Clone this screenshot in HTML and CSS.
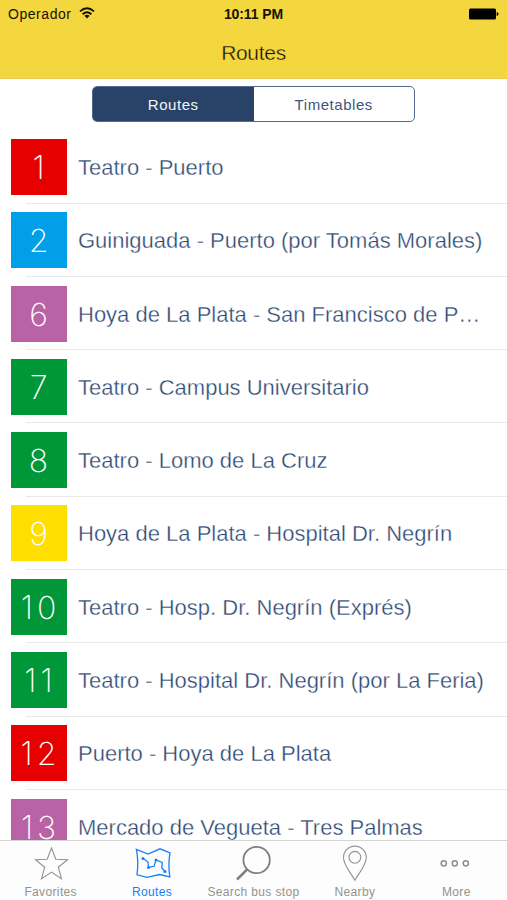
FILE: index.html
```html
<!DOCTYPE html>
<html lang="en">
<head>
<meta charset="utf-8">
<title>Routes</title>
<link rel="stylesheet" href="styles.css">
</head>
<body>
<div class="app">
  <header class="header">
    <div class="status">
      <div class="carrier"><span>Operador</span>
        <svg class="wifi" viewBox="0 0 16 12" width="16" height="12"><g fill="none" stroke="#171303" stroke-width="1.9"><path d="M1 4.4Q8 -1.8 15 4.4"/><path d="M3.6 7.2Q8 3.4 12.4 7.2"/></g><path d="M5.4 8.7Q8 6.7 10.6 8.7L8 11.5Z" fill="#171303"/></svg>
      </div>
      <div class="clock">10:11 PM</div>
      <div class="power"><svg width="30" height="12" viewBox="0 0 30 12"><rect x="0" y="0.5" width="27" height="11" rx="1.5"/><path d="M27.7 4Q29.6 4.3 29.6 6T27.7 8Z"/></svg></div>
    </div>
    <h1 class="title">Routes</h1>
  </header>
  <div class="filter"><div class="segments">
    <div class="segment selected">Routes</div><div class="segment">Timetables</div>
  </div></div>
  <main class="list">
    <div class="row"><div class="tile red">1</div><div class="name">Teatro - Puerto</div></div>
    <div class="row"><div class="tile blue">2</div><div class="name">Guiniguada - Puerto (por Tomás Morales)</div></div>
    <div class="row"><div class="tile purple">6</div><div class="name">Hoya de La Plata - San Francisco de P…</div></div>
    <div class="row"><div class="tile green">7</div><div class="name">Teatro - Campus Universitario</div></div>
    <div class="row"><div class="tile green">8</div><div class="name">Teatro - Lomo de La Cruz</div></div>
    <div class="row"><div class="tile yellow">9</div><div class="name">Hoya de La Plata - Hospital Dr. Negrín</div></div>
    <div class="row"><div class="tile green">10</div><div class="name">Teatro - Hosp. Dr. Negrín (Exprés)</div></div>
    <div class="row"><div class="tile green">11</div><div class="name">Teatro - Hospital Dr. Negrín (por La Feria)</div></div>
    <div class="row"><div class="tile red">12</div><div class="name">Puerto - Hoya de La Plata</div></div>
    <div class="row"><div class="tile purple">13</div><div class="name">Mercado de Vegueta - Tres Palmas</div></div>
  </main>
  <nav class="tabs">
    <div class="tab">
      <svg width="40" height="40" viewBox="0 0 40 40"><path d="M20.5 4L24.8 15.3L36.5 15.8L27.3 23.2L30.5 34.7L20.5 28.1L10.5 34.7L13.7 23.2L4.5 15.8L16.2 15.3Z" fill="none" stroke="#929292" stroke-width="1.1"/></svg>
      <span>Favorites</span></div>
    <div class="tab active">
      <svg width="40" height="40" viewBox="0 0 40 40"><g fill="none" stroke="#1680f5" stroke-width="1.3"><path d="M4.4 5.3L16 10L28 4.8L38 8.8Q36 20 37.8 33L27.5 30.5L15 33.3L5 30.8Q6.8 17 4.4 5.3Z"/><path d="M11 14.5L16 18L16.5 23.5L22 22.3L24 16L30.3 18.5L29.8 24L33 27.5"/></g><g fill="#1680f5"><circle cx="11" cy="14.5" r="1.5"/><circle cx="16.5" cy="23.5" r="1.5"/><circle cx="24" cy="16" r="1.5"/><circle cx="33" cy="27.5" r="1.5"/></g></svg>
      <span>Routes</span></div>
    <div class="tab">
      <svg width="40" height="40" viewBox="0 0 40 40"><g fill="none" stroke="#7e7e7e"><circle cx="23.6" cy="16" r="13.2" stroke-width="1.8"/><path d="M14.2 25.4L4 35.5" stroke-width="2.5"/></g></svg>
      <span>Search bus stop</span></div>
    <div class="tab">
      <svg width="40" height="40" viewBox="0 0 40 40"><g fill="none" stroke="#929292" stroke-width="1.1"><path d="M19.9 36.3C16.4 29.5 8.5 21.5 8.5 13.5A11.4 11.4 0 0 1 31.3 13.5C31.3 21.5 23.4 29.5 19.9 36.3Z"/><circle cx="19.9" cy="13.3" r="5.9"/></g></svg>
      <span>Nearby</span></div>
    <div class="tab">
      <svg width="40" height="40" viewBox="0 0 40 40"><g fill="none" stroke="#8d8d8d" stroke-width="1.5"><circle cx="7.8" cy="19.3" r="2.6"/><circle cx="18.8" cy="19.3" r="2.6"/><circle cx="29.8" cy="19.3" r="2.6"/></g></svg>
      <span>More</span></div>
  </nav>
</div>
</body>
</html>
```
FILE: styles.css
```css
* { box-sizing: border-box; }
body { margin: 0; background: #fff; font-family: "Liberation Sans", Arial, sans-serif; }
.app { width: 507px; height: 900px; display: flex; flex-direction: column; overflow: hidden; }
.header { height: 79px; flex: none; background: #f4d63f; color: #171303; border-bottom: 1px solid #e6cd58; }
.status { display: grid; grid-template-columns: 1fr auto 1fr; align-items: center; height: 28px; padding: 0 8px; font-size: 14px; }
.carrier { display: flex; align-items: center; gap: 7px; letter-spacing: .55px; }
.wifi { margin-top: -3px; }
.clock { font-weight: bold; font-size: 14px; letter-spacing: -.1px; }
.power { display: flex; justify-content: flex-end; fill: #000; }
.title { margin: 11px 0 0; font-size: 21px; line-height: 27px; font-weight: normal; text-align: center; letter-spacing: -.3px; -webkit-text-stroke: .35px #f4d63f; }
.filter { height: 51.3px; flex: none; padding-top: 7px; display: flex; justify-content: center; }
.segments { width: 323px; height: 36px; display: flex; border: 1.4px solid #526b8f; border-radius: 5px; overflow: hidden; }
.segment { flex: 1; display: flex; align-items: center; justify-content: center; color: #3d5682; font-size: 15px; letter-spacing: .55px; }
.selected { background: #294368; color: #f2f6fb; }
.list { flex: 1; min-height: 0; overflow: hidden; }
.row { height: 73.3px; display: flex; align-items: center; padding-left: 11px; background: linear-gradient(#e9e9eb, #e9e9eb) 26px 100% / 100% 1px no-repeat; }
.tile { width: 56px; height: 56px; flex: none; margin-right: 11px; display: flex; align-items: center; justify-content: center; color: #fff; background: var(--line); font: 200 32px/1 Inter, sans-serif; letter-spacing: 4px; padding: 2px 0 0 3px; }
.red { --line: #e60000; }
.blue { --line: #009fe8; }
.purple { --line: #b962a5; }
.green { --line: #009739; }
.yellow { --line: #ffde00; }
.name { font-size: 22px; color: #294571; white-space: nowrap; padding-top: 2px; -webkit-text-stroke: .35px #fff; }
.tabs { height: 60px; flex: none; display: grid; grid-template-columns: repeat(5, 1fr); border-top: 1px solid #d4d4d4; background: #fdfdfd; }
.tab { display: flex; flex-direction: column; align-items: center; color: #929292; font-size: 12px; letter-spacing: .36px; white-space: nowrap; }
.tab svg { margin-top: 3px; flex: none; }
.tab span { line-height: 14px; margin-top: 1px; }
.active { color: #1680f5; }
```
